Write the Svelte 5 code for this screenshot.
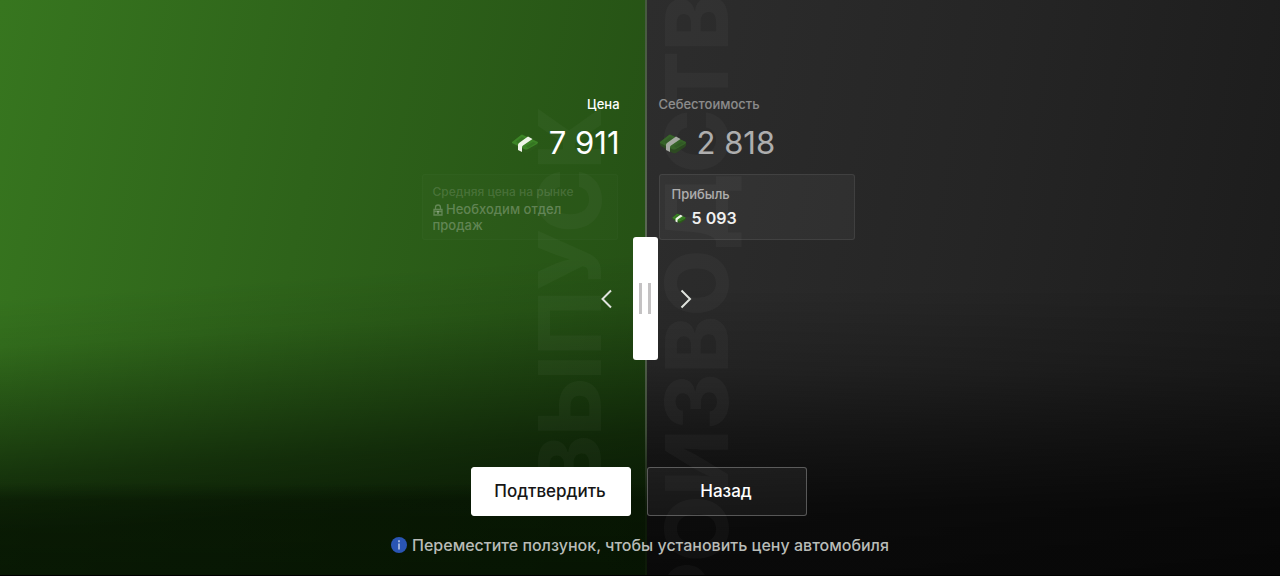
<script>
  const THUMB = 25;
  const min = 0;
  const max = 15696;
  const cost = 2818;
  let price = $state(7911);

  let ratio = $derived((price - min) / (max - min));
  let split = $derived(`calc((100% - ${THUMB}px) * ${ratio} + ${(THUMB + 3) / 2}px)`);

  const format = (n) => String(n).replace(/\B(?=(\d{3})+$)/g, ' ');
</script>

{#snippet cash(size)}
  <svg class="cash" width={size} height={size * 0.75} viewBox="0 0 28 21" aria-hidden="true">
    <path d="M1 9 10 2q1-1 2 0l15 7q1 3-1 5l-9 6q-2 1-5-1L2 13q-2-2-1-4z" fill="#2b5a19" />
    <path d="M1 9 10 2q1-1 2 0l15 7q0 1-1 2l-9 5q-2 1-4 0L1 10z" fill="#3c8426" />
    <path d="M5 8.500 11 4l3 1.500-7 5z" fill="#357522" />
    <path d="M15 13l7-4 3 1-8 5z" fill="#357522" />
    <path d="M17 3.500 21.500 6 12 12.500q-1 .7-1 2V19l-4-2v-5q0-1.200 1-2z" fill="#eef4e8" />
  </svg>
{/snippet}

<main class="stage">
  <div class="panels">
    <section class="panel sale" style:width={split}>
      <span class="watermark" aria-hidden="true">ВЫПУСК</span>
      <div class="info">
        <h2 class="label">Цена</h2>
        <p class="amount">{@render cash(28)}{format(price)}</p>
        <div class="card locked">
          <p class="card-title">Средняя цена на рынке</p>
          <p class="card-note">
            <svg class="lock" width="10" height="12" viewBox="0 0 10 12" aria-hidden="true">
              <path d="M2.5 5V3.5a2.5 2.5 0 0 1 5 0V5M1 5.5h8v5.5H1zM1 7.5h8" fill="none" stroke="currentColor" stroke-width="1.3" />
              <path d="M4 7h2v3H4z" fill="currentColor" />
            </svg>
            Необходим отдел продаж
          </p>
        </div>
      </div>
    </section>

    <section class="panel making">
      <span class="watermark" aria-hidden="true">ПРОИЗВОДСТВО</span>
      <div class="info">
        <h2 class="label">Себестоимость</h2>
        <p class="amount">{@render cash(28)}{format(cost)}</p>
        <div class="card">
          <p class="card-title">Прибыль</p>
          <p class="profit">{@render cash(14)}{format(price - cost)}</p>
        </div>
      </div>
    </section>
  </div>

  <div class="slider">
    <input type="range" {min} {max} bind:value={price} aria-label="Цена" />
    <div class="arrows" style:width={split} aria-hidden="true">
      <svg width="12" height="20" viewBox="0 0 12 20"><path d="M11 1.500 2.500 10l8.500 8.500" /></svg>
      <svg width="12" height="20" viewBox="0 0 12 20"><path d="M1.500 1.500 10 10l-8.500 8.500" /></svg>
    </div>
  </div>

  <footer class="footer">
    <div class="buttons">
      <button type="button" class="confirm">Подтвердить</button>
      <button type="button" class="back">Назад</button>
    </div>
    <p class="hint">
      <svg width="16" height="16" viewBox="0 0 16 16" aria-hidden="true">
        <circle cx="8" cy="8" r="8" fill="#2a55b4" />
        <path d="M8 3.200v2M8 6.500v6" stroke="#b9c8ea" stroke-width="1.600" />
      </svg>
      Переместите ползунок, чтобы установить цену автомобиля
    </p>
  </footer>
</main>

<style>
  :global(body) {
    margin: 0;
    background: #000;
  }

  .stage {
    display: grid;
    grid-template: minmax(100vh, auto) / minmax(0, 1fr);
    font-family: Inter, 'Noto Sans', sans-serif;
    color: #fff;
    overflow: hidden;
  }

  .stage > * {
    grid-area: 1 / 1;
  }

  h2,
  p {
    margin: 0;
  }

  .panels {
    display: flex;
    border-bottom: 1px solid #000;
  }

  .panel {
    position: relative;
    box-sizing: border-box;
    overflow: hidden;
    padding-top: 96px;
  }

  .sale {
    flex: none;
    display: flex;
    justify-content: flex-end;
    padding-right: 25px;
    border-right: 2px solid;
    border-image: linear-gradient(180deg, #46593f, #5e6a58 50%, #3c4a36 75%, #0d1a08 88%) 1;
    background:
      linear-gradient(180deg, transparent 84%, rgba(2, 12, 0, 0.4) 87%, rgba(2, 12, 0, 0.5) 100%),
      linear-gradient(176deg, transparent 48%, rgba(2, 12, 0, 0.08) 56%, rgba(2, 12, 0, 0.35) 67%, rgba(2, 12, 0, 0.6) 77%, rgba(2, 12, 0, 0.74) 86%),
      linear-gradient(102deg, #37761f 0%, #2e631a 45%, #244e14 100%);
  }

  .making {
    flex: 1;
    min-width: 0;
    padding-left: 12px;
    background:
      linear-gradient(180deg, transparent 50%, rgba(4, 4, 4, 0.2) 64%, rgba(4, 4, 4, 0.5) 75%, rgba(4, 4, 4, 0.8) 88%, rgba(4, 4, 4, 0.86) 100%),
      linear-gradient(100deg, #2d2d2d 0%, #252525 50%, #1b1b1b 100%);
  }

  .watermark {
    position: absolute;
    top: 52%;
    writing-mode: vertical-rl;
    transform: translateY(-50%) rotate(180deg);
    font-size: 86px;
    font-weight: 800;
    line-height: 104px;
    white-space: nowrap;
    color: rgba(255, 255, 255, 0.03);
  }

  .sale .watermark {
    right: 23px;
  }

  .making .watermark {
    top: 53%;
    left: -2px;
  }

  .info {
    position: relative;
  }

  .sale .info {
    display: flex;
    flex-direction: column;
    align-items: flex-end;
  }

  .label {
    font-size: 13px;
    font-weight: 500;
    line-height: 16px;
  }

  .amount {
    display: flex;
    align-items: center;
    gap: 10px;
    margin: 11px 0 11px;
    font-size: 31px;
    line-height: 40px;
  }

  .making .label,
  .making .amount {
    opacity: 0.62;
  }

  .making .label {
    opacity: 0.45;
  }

  .card {
    box-sizing: border-box;
    width: 196px;
    min-height: 65px;
    padding: 11px 12px;
    border: 1px solid rgba(255, 255, 255, 0.08);
    border-radius: 3px;
    background: rgba(255, 255, 255, 0.04);
    font-size: 13px;
    font-weight: 500;
    line-height: 16px;
  }

  .card-title {
    color: rgba(255, 255, 255, 0.6);
  }

  .profit {
    display: flex;
    align-items: center;
    gap: 6px;
    margin-top: 6px;
    font-size: 16px;
    font-weight: 600;
    line-height: 20px;
    color: #f0f0f0;
  }

  .locked {
    margin-right: 2px;
    padding: 9px 10px 6px;
    border-color: rgba(255, 255, 255, 0.02);
    background: rgba(255, 255, 255, 0.01);
    font-size: 12px;
  }

  .locked .card-title {
    color: rgba(255, 255, 255, 0.15);
  }

  .card-note {
    font-size: 13px;
    margin-top: 1px;
    color: rgba(255, 255, 255, 0.26);
  }

  .lock {
    vertical-align: -2px;
  }

  .slider {
    position: relative;
    display: grid;
    align-items: center;
    align-self: center;
    margin-top: 21px;
  }

  .slider > * {
    grid-area: 1 / 1;
  }

  input {
    appearance: none;
    width: 100%;
    height: 123px;
    margin: 0;
    background: none;
    cursor: ew-resize;
  }

  input::-webkit-slider-thumb {
    appearance: none;
    width: 25px;
    height: 123px;
    border-radius: 3px;
    background:
      linear-gradient(#c4c2c3, #c4c2c3) 6px 50% / 3px 31px no-repeat,
      linear-gradient(#c4c2c3, #c4c2c3) 15px 50% / 3px 31px no-repeat,
      #fff;
  }

  .arrows {
    display: flex;
    justify-content: flex-end;
    gap: 68px;
    box-sizing: border-box;
    pointer-events: none;
  }

  .arrows svg {
    flex: none;
    fill: none;
    stroke: #e0e4de;
    stroke-width: 2;
  }

  .arrows svg:last-child {
    margin-right: -45px;
  }

  .footer {
    display: flex;
    flex-direction: column;
    align-items: center;
    align-self: end;
    position: relative;
    padding-bottom: 21px;
  }

  .buttons {
    display: flex;
    gap: 16px;
    margin-right: 2px;
  }

  button {
    box-sizing: border-box;
    width: 160px;
    height: 49px;
    padding: 0 2px 2px 0;
    border: 1px solid #fff;
    border-radius: 3px;
    font: 500 17px/20px Inter, 'Noto Sans', sans-serif;
    cursor: pointer;
  }

  .confirm {
    background: #fff;
    color: #151515;
  }

  .back {
    border-color: rgba(255, 255, 255, 0.28);
    background: rgba(255, 255, 255, 0.05);
    color: #fff;
  }

  .hint {
    display: flex;
    align-items: center;
    gap: 5px;
    margin-top: 19px;
    font-size: 16px;
    font-weight: 500;
    line-height: 20px;
    color: #b9bcb8;
  }
</style>
